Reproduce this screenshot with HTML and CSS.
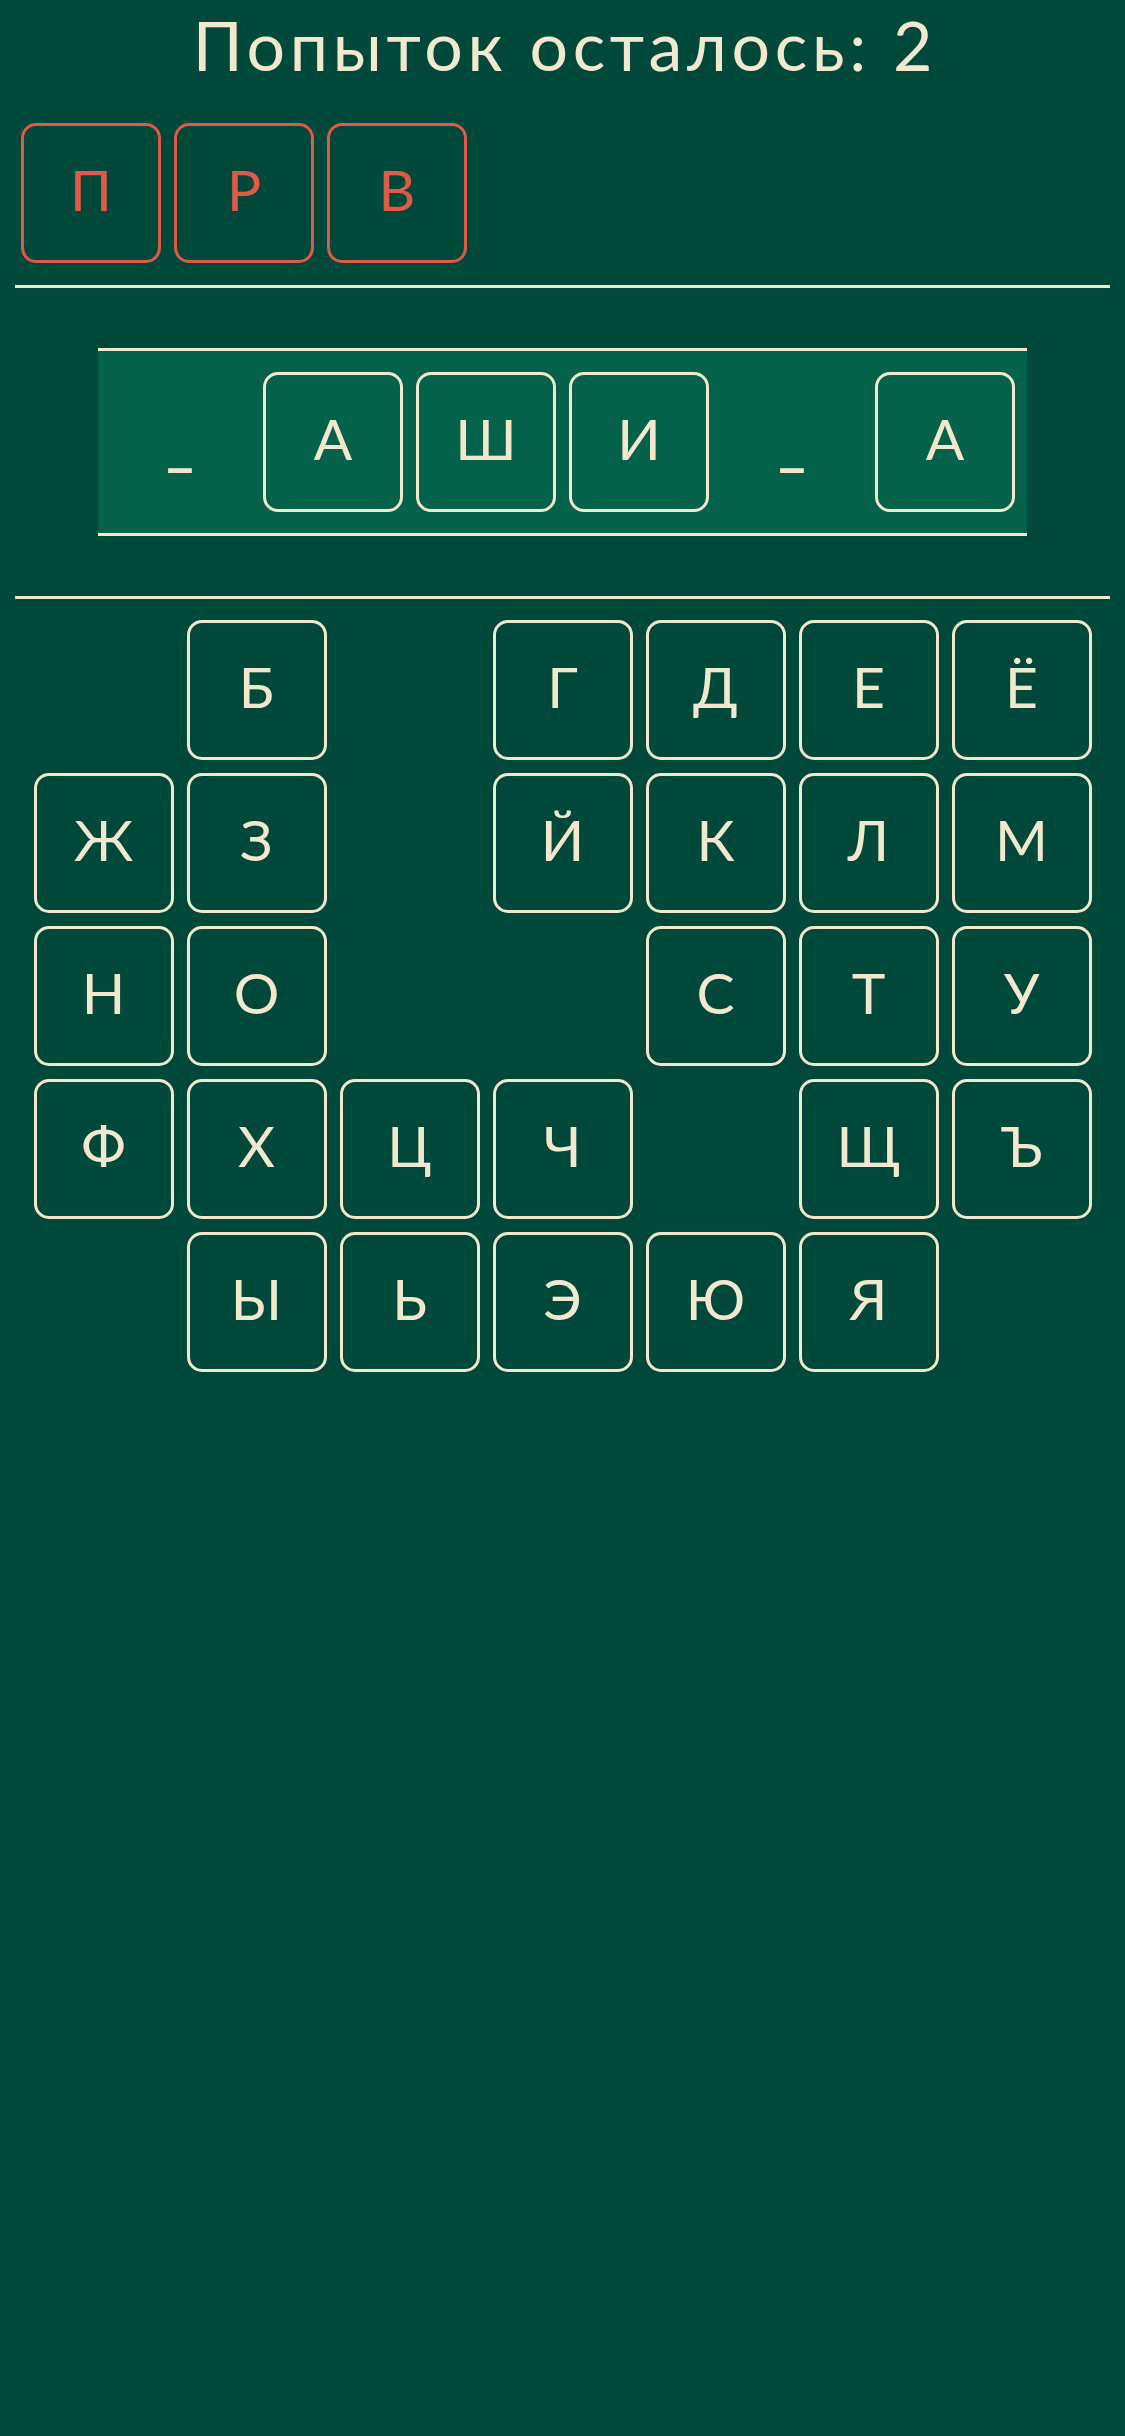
FILE: index.html
```html
<!DOCTYPE html>
<html lang="ru">
<head>
<meta charset="utf-8">
<title>Виселица</title>
<link rel="stylesheet" href="styles.css">
</head>
<body>
<main class="page">
  <h1 class="title">Попыток осталось: 2</h1>

  <div class="wrong">
    <div class="tile tile-wrong">П</div>
    <div class="tile tile-wrong">Р</div>
    <div class="tile tile-wrong">В</div>
  </div>

  <div class="rule"></div>

  <div class="word">
    <div class="slot"><span class="blank">_</span></div>
    <div class="slot tile">А</div>
    <div class="slot tile">Ш</div>
    <div class="slot tile">И</div>
    <div class="slot"><span class="blank">_</span></div>
    <div class="slot tile">А</div>
  </div>

  <div class="rule rule-bottom"></div>

  <div class="keyboard">
    <div class="tile key used">А</div>
    <div class="tile key">Б</div>
    <div class="tile key used">В</div>
    <div class="tile key">Г</div>
    <div class="tile key">Д</div>
    <div class="tile key">Е</div>
    <div class="tile key">Ё</div>
    <div class="tile key">Ж</div>
    <div class="tile key">З</div>
    <div class="tile key used">И</div>
    <div class="tile key">Й</div>
    <div class="tile key">К</div>
    <div class="tile key">Л</div>
    <div class="tile key">М</div>
    <div class="tile key">Н</div>
    <div class="tile key">О</div>
    <div class="tile key used">П</div>
    <div class="tile key used">Р</div>
    <div class="tile key">С</div>
    <div class="tile key">Т</div>
    <div class="tile key">У</div>
    <div class="tile key">Ф</div>
    <div class="tile key">Х</div>
    <div class="tile key">Ц</div>
    <div class="tile key">Ч</div>
    <div class="tile key used">Ш</div>
    <div class="tile key">Щ</div>
    <div class="tile key">Ъ</div>
    <div class="tile key">Ы</div>
    <div class="tile key">Ь</div>
    <div class="tile key">Э</div>
    <div class="tile key">Ю</div>
    <div class="tile key">Я</div>
  </div>
</main>
</body>
</html>
```

FILE: styles.css
```css
html, body {
  margin: 0;
  padding: 0;
  background: #00493a;
}

body {
  min-height: 2436px;
  font-family: "Lato", "Noto Sans", sans-serif;
  color: #f2e8cf;
}

.page {
  padding: 0 15px;
}

.title {
  margin: 11px 0 0;
  padding-left: 5px;
  font-size: 68px;
  line-height: 68px;
  font-weight: 400;
  letter-spacing: 4.7px;
  text-align: center;
  color: #f2e8cf;
}

.wrong {
  display: flex;
  gap: 13px;
  padding-left: 6px;
  margin-top: 44px;
}

.tile {
  box-sizing: border-box;
  width: 140px;
  height: 140px;
  border: 3px solid #f2e8cf;
  border-radius: 15px;
  display: flex;
  align-items: center;
  justify-content: center;
  font-size: 57px;
  line-height: 1.2;
  padding-bottom: 7px;
  color: #f2e8cf;
}

.tile-wrong {
  border-color: #e05a48;
  color: #e05a48;
}

.rule {
  height: 3px;
  background: #f2e8cf;
  margin-top: 22px;
}

.word {
  width: 929px;
  box-sizing: border-box;
  margin: 60px auto 0;
  padding: 21px 12px;
  background: #05624a;
  border-top: 3px solid #f2e8cf;
  border-bottom: 3px solid #f2e8cf;
  display: flex;
  gap: 13px;
}

.slot {
  width: 140px;
  height: 140px;
  flex: none;
  display: flex;
  align-items: center;
  justify-content: center;
}

.blank {
  font-size: 60px;
  line-height: 1;
  font-weight: 700;
  color: #f2e8cf;
  padding-bottom: 2px;
}

.rule-bottom {
  margin-top: 60px;
}

.keyboard {
  margin: 21px auto 0;
  width: 1058px;
  display: flex;
  flex-wrap: wrap;
  justify-content: center;
  gap: 13px;
}

.used {
  visibility: hidden;
}
```
